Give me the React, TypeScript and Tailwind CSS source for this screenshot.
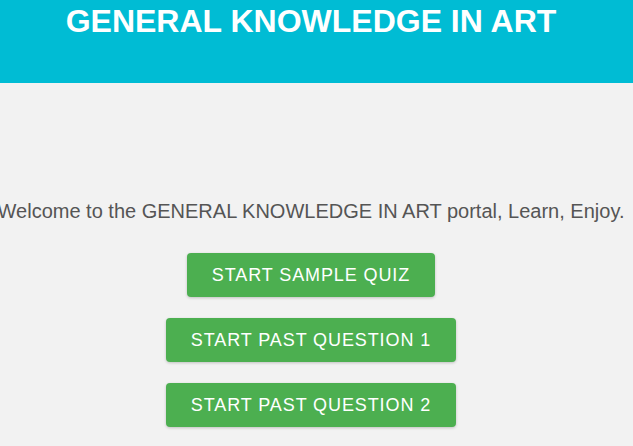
export default function App() {
  const buttons = ["START SAMPLE QUIZ", "START PAST QUESTION 1", "START PAST QUESTION 2"]

  return (
    <div className="min-h-[446px] bg-[#f2f2f2] font-['Liberation_Sans',Arial,sans-serif]">
      {/* Header */}
      <div className="h-[83px] bg-[#00bcd4] pt-[3px]">
        <h1 className="w-[622px] text-center text-[32px] font-bold leading-[37px] text-white">
          GENERAL KNOWLEDGE IN ART
        </h1>
      </div>

      {/* Body */}
      <div className="flex w-[622px] flex-col items-center pt-[115px]">
        <p className="whitespace-nowrap text-[20px] leading-[26px] text-[#555]">
          Welcome to the GENERAL KNOWLEDGE IN ART portal, Learn, Enjoy.
        </p>
        <div className="mt-[29px] flex flex-col items-center gap-[21px]">
          {buttons.map((label) => (
            <button
              key={label}
              className="h-[44px] rounded-[4px] bg-[#4caf50] px-[25px] text-[18px] tracking-[0.9px] text-white shadow-[0_1px_3px_rgba(0,0,0,0.2)]"
            >
              {label}
            </button>
          ))}
        </div>
      </div>
    </div>
  )
}
